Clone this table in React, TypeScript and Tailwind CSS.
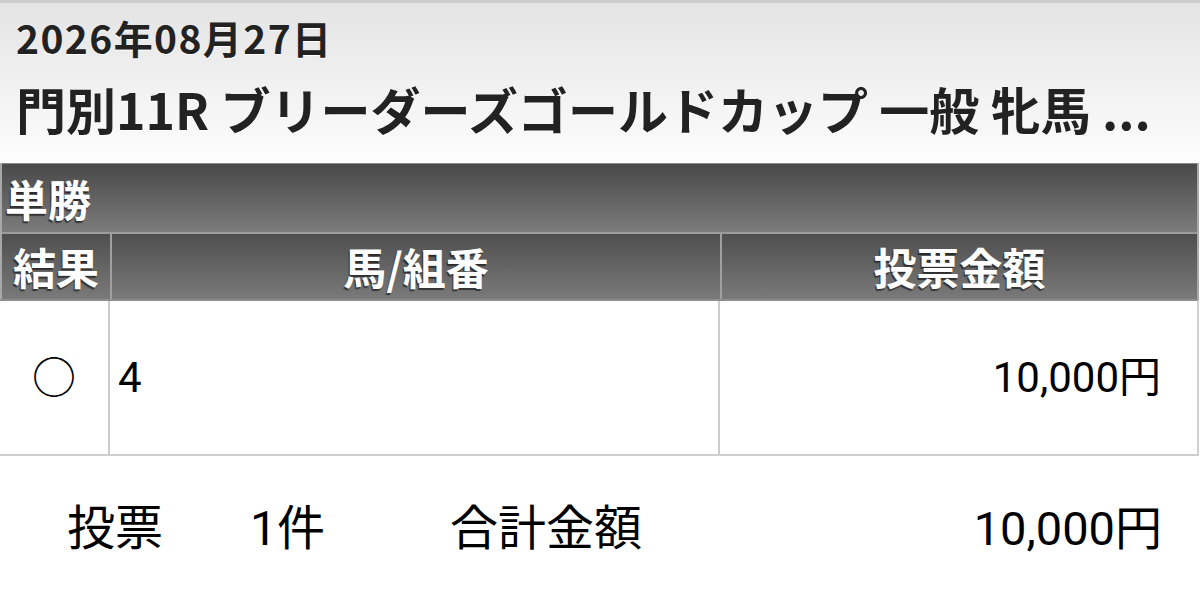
const jp = "font-['Roboto','Noto_Sans_CJK_JP',sans-serif]";

export default function App() {
  return (
    <div className={`w-[1200px] h-[606px] bg-white overflow-hidden ${jp}`}>
      {/* race header */}
      <div className="h-[163px] border-t-[3px] border-[#cdcdcd] bg-gradient-to-b from-[#e4e4e4] to-[#fdfdfd] pl-[16px] pt-[8px] text-[#222] font-bold [text-shadow:0_1px_0_#fff]">
        <div className="text-[39px] leading-[52px] font-['Noto_Sans_CJK_JP',sans-serif] tracking-[1.4px]">2026年08月27日</div>
        <div className="mt-[14px] text-[50px] leading-[62px] font-['Noto_Sans_CJK_JP',sans-serif] whitespace-nowrap">
          門別11R ブリーダーズゴールドカップ 一般 牝馬 ...
        </div>
      </div>

      {/* bet table */}
      <div className="w-[1199px] border-x-2 border-[#a8a8a8]">
        <div className="h-[69px] border-t border-[#8a8a8a] bg-gradient-to-b from-[#494949] to-[#7c7c7c] pl-[3px] pt-[6px] text-white text-[43px] leading-[56px] font-bold font-['Noto_Sans_CJK_JP',sans-serif] [text-shadow:-1px_2px_1px_rgba(0,0,0,0.55)]">
          単勝
        </div>
        <div className="grid grid-cols-[108px_610px_1fr] h-[67px] border-t-2 border-[#9c9c9c] text-white text-[43px] font-bold font-['Noto_Sans_CJK_JP',sans-serif] [text-shadow:-1px_2px_1px_rgba(0,0,0,0.55)]">
          <div className="flex items-center justify-center bg-gradient-to-b from-[#4f4f4f] to-[#7a7a7a]">結果</div>
          <div className="flex items-center justify-center border-l-2 border-[#a0a0a0] bg-gradient-to-b from-[#4f4f4f] to-[#7a7a7a]">馬/組番</div>
          <div className="flex items-center justify-center border-l-2 border-[#a0a0a0] bg-gradient-to-b from-[#4f4f4f] to-[#7a7a7a]">投票金額</div>
        </div>
      </div>
      <div className="w-[1199px] grid grid-cols-[108px_610px_1fr] h-[157px] border-t-2 border-[#8e8e8e] border-b-2 border-b-[#cfcfcf] border-r-2 border-r-[#d0d0d0] text-black text-[42px]">
        <div className="flex items-center justify-center text-[44px] pt-[2px]">○</div>
        <div className="flex items-center pl-[8px] border-l-2 border-[#cccccc]">4</div>
        <div className="flex items-center justify-end pr-[36px] border-l-2 border-[#cccccc]">10,000円</div>
      </div>

      {/* summary */}
      <div className="flex items-center h-[150px] pb-[4px] text-black text-[48px]">
        <div className="w-[250px] pl-[67px]">投票</div>
        <div className="w-[200px]">1件</div>
        <div className="flex-1">合計金額</div>
        <div className="pr-[38px] text-[47px]">10,000円</div>
      </div>
    </div>
  );
}
